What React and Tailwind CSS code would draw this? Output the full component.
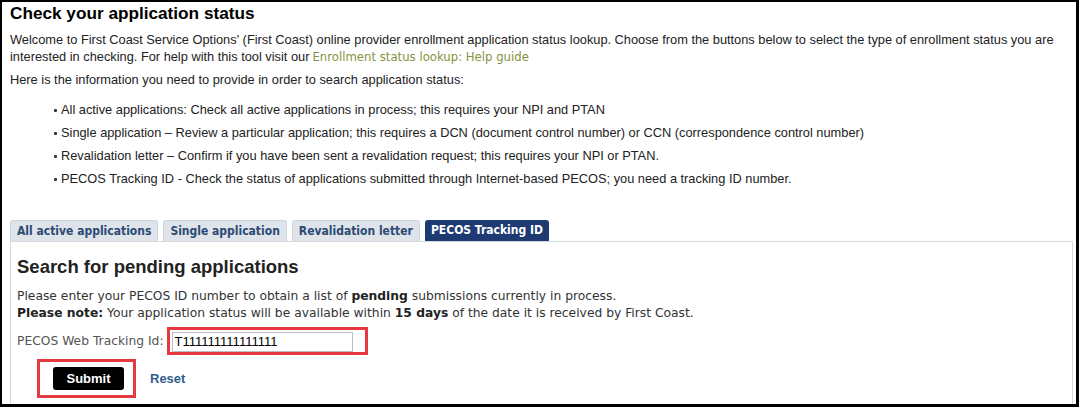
/** Enrollment status lookup — PECOS tracking ID search panel. */

const ARIAL = "font-['Liberation_Sans',Arial,sans-serif]";
const VERDANA = "font-['DejaVu_Sans',Verdana,sans-serif]";
const TAHOMA = "font-['DejaVu_Sans_Condensed','DejaVu_Sans',Tahoma,sans-serif]";

const BULLETS = [
  "All active applications: Check all active applications in process; this requires your NPI and PTAN",
  "Single application \u2013 Review a particular application; this requires a DCN (document control number) or CCN (correspondence control number)",
  "Revalidation letter \u2013 Confirm if you have been sent a revalidation request; this requires your NPI or PTAN.",
  "PECOS Tracking ID - Check the status of applications submitted through Internet-based PECOS; you need a tracking ID number.",
];

const TABS = ["All active applications", "Single application", "Revalidation letter", "PECOS Tracking ID"];

function Tab({ label, active }) {
  return (
    <div
      className={`rounded-t-[3px] px-[6px] pt-[2px] pb-[1px] text-[12px] font-bold leading-[17px] ${TAHOMA} ${
        active ? "bg-[#1d3a72] text-white" : "border border-b-0 border-[#cfd5dc] bg-[#dfe4ea] text-[#2c4a74]"
      }`}
    >
      {label}
    </div>
  );
}

export default function App() {
  return (
    <div className="h-[407px] w-[1079px] overflow-hidden border-[2px] border-r-[3px] border-b-[3px] border-black bg-white">
      <div className={`px-[8px] ${ARIAL} text-[12.8px] text-[#222]`}>
        <h1 className="text-[17.2px] font-bold leading-[22px] text-black">Check your application status</h1>
        <p className="mt-[7px] leading-[17px]">
          Welcome to First Coast Service Options' (First Coast) online provider enrollment application status lookup. Choose from the buttons below to select the type of enrollment status you are interested in checking. For help with this tool visit our
          <span className={`ml-[3px] ${TAHOMA} text-[13px] text-[#86923f]`}>Enrollment status lookup: Help guide</span>
        </p>
        <p className="mt-[6px] leading-[17px]">Here is the information you need to provide in order to search application status:</p>
        <ul className="mt-[13px] flex flex-col gap-[5px] pl-[44px]">
          {BULLETS.map((b) => (
            <li key={b} className="flex items-center gap-[4px] leading-[18px]">
              <span className="h-[3px] w-[3px] shrink-0 rounded-[1px] bg-[#333]" />
              {b}
            </li>
          ))}
        </ul>
      </div>

      <div className="mt-[32px] pl-[8px] pr-[3px]">
        <div className="flex gap-[5px]">
          {TABS.map((t, i) => (
            <Tab key={t} label={t} active={i === TABS.length - 1} />
          ))}
        </div>
        <div className={`h-[200px] border border-[#d4d9de] px-[6px] pt-[14px] ${VERDANA} text-[12.3px] text-[#333]`}>
          <h2 className={`${ARIAL} text-[18.5px] font-bold leading-[22px] text-[#222]`}>Search for pending applications</h2>
          <p className="mt-[10px] leading-[17px]">
            Please enter your PECOS ID number to obtain a list of <b className="text-[#222]">pending</b> submissions currently in process.
            <br />
            <b className="text-[#222]">Please note:</b> Your application status will be available within <b className="text-[#222]">15 days</b> of the date it is received by First Coast.
          </p>
          <div className="mt-[5px] flex items-center gap-[3px]">
            <span className="text-[#555]">PECOS Web Tracking Id:</span>
            <div className="border-[3px] border-[#e5383f] px-[2px] pt-[2px] pr-[12px]">
              <div className={`h-[20px] w-[181px] border border-[#b9bec4] px-[2px] ${ARIAL} text-[13px] leading-[18px] text-black`}>
                T111111111111111
              </div>
            </div>
          </div>
          <div className="mt-[4px] flex items-center gap-[14px] pl-[20px]">
            <div className="border-[3px] border-[#e5383f] py-[5px] pl-[13px] pr-[9px]">
              <button
                type="button"
                className={`block h-[23px] w-[71px] rounded-[3px] bg-black ${ARIAL} text-[13px] font-bold text-white`}
              >
                Submit
              </button>
            </div>
            <a className={`${ARIAL} text-[13px] font-bold text-[#2e5d8e]`}>Reset</a>
          </div>
        </div>
      </div>
    </div>
  );
}
